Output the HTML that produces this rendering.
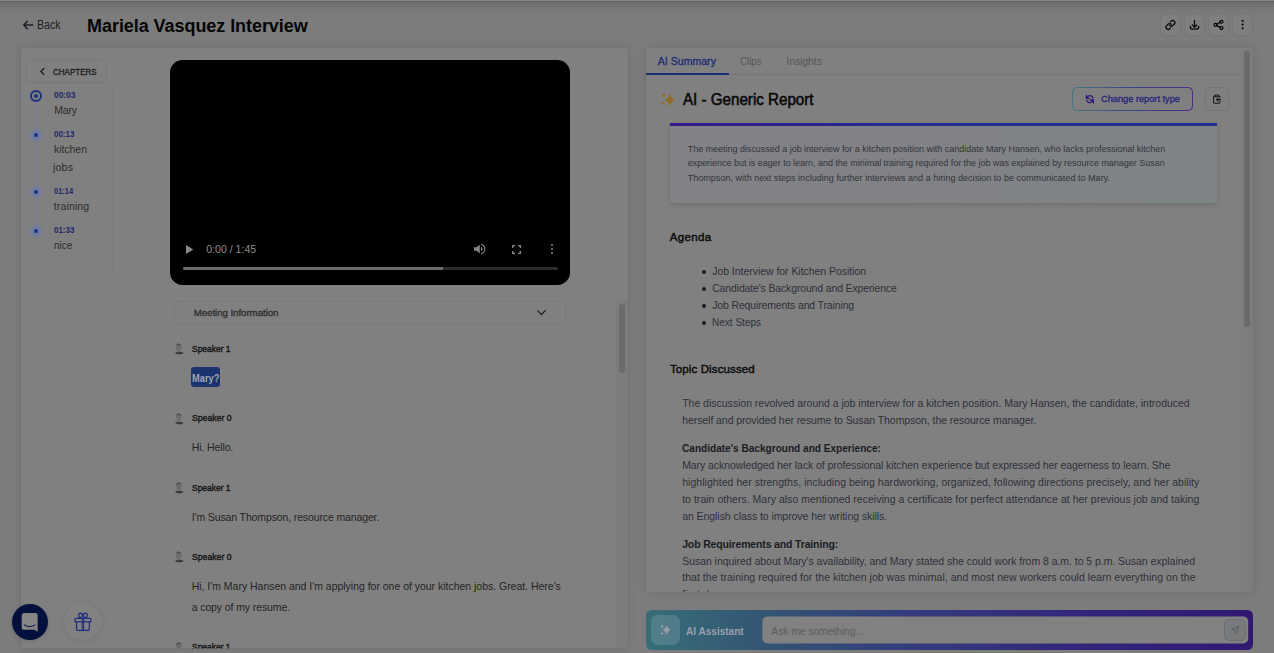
<!DOCTYPE html>
<html lang="en"><head><meta charset="utf-8"><title>Mariela Vasquez Interview</title>
<style>
*{box-sizing:border-box}
html,body{margin:0;padding:0}
body{width:1274px;height:653px;overflow:hidden;background:#7c7c7c;position:relative;font-family:"Liberation Sans",sans-serif;}
.abs{position:absolute}
.t{position:absolute;white-space:nowrap;line-height:normal;}
.panel{position:absolute;background:#808080;border-radius:4px;box-shadow:0 0 8px rgba(0,0,0,.12)}
.btn{position:absolute;border:1px solid #747577;border-radius:5px;background:#808080}
svg{position:absolute;overflow:visible}
</style></head>
<body>
<div class="abs" style="left:0;top:0;width:1274px;height:17px;background:linear-gradient(#6d6d6d,#727272 25%,#787878 55%,rgba(124,124,124,0))"></div>
<div class="abs" style="left:0;top:0;width:1274px;height:1px;background:#838383"></div>
<div class="abs" style="left:0;top:1px;width:1274px;height:1px;background:#626364"></div>
<svg style="left:0;top:0" width="80" height="40" viewBox="0 0 80 40"><path d="M27.4 21.3L23.7 25L27.400 28.700M24 25H32.600" fill="none" stroke="#1d2026" stroke-width="1.550" stroke-linecap="round" stroke-linejoin="round"/></svg>
<div class="btn" style="left:1160.2px;top:14.1px;width:20.6px;height:21.7px;border-radius:5.5px;background:#7f7f7f;border-color:#72767b"></div>
<div class="btn" style="left:1184.2px;top:14.1px;width:20.6px;height:21.7px;border-radius:5.5px;background:#7f7f7f;border-color:#72767b"></div>
<div class="btn" style="left:1208.2px;top:14.1px;width:20.6px;height:21.7px;border-radius:5.5px;background:#7f7f7f;border-color:#72767b"></div>
<div class="btn" style="left:1232.2px;top:14.1px;width:20.6px;height:21.7px;border-radius:5.5px;background:#7f7f7f;border-color:#72767b"></div>
<svg style="left:0;top:0" width="1274" height="48" viewBox="0 0 1274 48" fill="none" stroke="#0a0a0a" stroke-linecap="round" stroke-linejoin="round">
<g transform="translate(1165.1 19.6) scale(0.4458)" stroke-width="2.9"><path d="M10 13a5 5 0 0 0 7.54.54l3-3a5 5 0 0 0-7.07-7.07l-1.72 1.71"/><path d="M14 11a5 5 0 0 0-7.54-.54l-3 3a5 5 0 0 0 7.07 7.07l1.71-1.71"/></g>
<path d="M1194.5 20.4V27M1192.3 24.9L1194.5 27.2L1196.7 24.9" stroke-width="1.3"/>
<path d="M1190.4 26.4V27.4Q1190.4 29.1 1192.1 29.1H1196.900Q1198.600 29.100 1198.600 27.400V26.400" stroke-width="1.450"/>
<g stroke-width="1.250"><circle cx="1215.500" cy="24.900" r="1.450"/><circle cx="1221.500" cy="21.700" r="1.450"/><circle cx="1221.500" cy="28.100" r="1.450"/><path d="M1216.800 24.200L1220.200 22.400M1216.800 25.600L1220.200 27.400"/></g>
<g fill="#0a0a0a" stroke="none"><circle cx="1242.600" cy="20.900" r="1.100"/><circle cx="1242.600" cy="24.600" r="1.100"/><circle cx="1242.600" cy="28.300" r="1.100"/></g>
</svg>
<div class="panel" style="left:20.5px;top:47.6px;width:607.7px;height:600.8px"></div>
<div class="btn" style="left:26.3px;top:60px;width:80.4px;height:23px;border-radius:4.5px;border-color:#777879"></div>
<svg style="left:39.5px;top:68.4px" width="5" height="7" viewBox="0 0 5 7"><path d="M3.9 0.5 L0.8 3.500 L3.900 6.500" fill="none" stroke="#151515" stroke-width="1.1" stroke-linecap="round" stroke-linejoin="round"/></svg>
<div class="abs" style="left:35.4px;top:96px;width:1.3px;height:135px;background:#7a8090"></div>
<div class="abs" style="left:112.2px;top:88px;width:1px;height:186px;background:#7a7a7a"></div>
<div class="abs" style="left:30px;top:89.9px;width:12px;height:12px;border-radius:50%;border:2.1px solid #1a3380;background:#808080"></div>
<div class="abs" style="left:33.6px;top:93.5px;width:4.8px;height:4.8px;border-radius:50%;background:#1a3380"></div>
<div class="abs" style="left:30px;top:129.1px;width:12px;height:12px;border-radius:50%;background:#6f7c9c"></div>
<div class="abs" style="left:33.8px;top:132.9px;width:4.4px;height:4.4px;border-radius:50%;background:#1a317e"></div>
<div class="abs" style="left:30px;top:185.9px;width:12px;height:12px;border-radius:50%;background:#6f7c9c"></div>
<div class="abs" style="left:33.8px;top:189.70000000000002px;width:4.4px;height:4.4px;border-radius:50%;background:#1a317e"></div>
<div class="abs" style="left:30px;top:224.8px;width:12px;height:12px;border-radius:50%;background:#6f7c9c"></div>
<div class="abs" style="left:33.8px;top:228.60000000000002px;width:4.4px;height:4.4px;border-radius:50%;background:#1a317e"></div>
<div class="abs" style="left:170px;top:60px;width:400px;height:225px;border-radius:12.5px;background:#000"></div>
<svg style="left:186px;top:244.6px" width="7.500" height="9" viewBox="0 0 7.500 9"><path d="M0 0 L7.300 4.500 L0 9 Z" fill="#868686"/></svg>
<div class="abs" style="left:182.6px;top:267.1px;width:375.6px;height:3px;border-radius:1.5px;background:#2b2b2b"></div>
<div class="abs" style="left:182.6px;top:267.1px;width:260.5px;height:3px;border-radius:1.5px 0 0 1.5px;background:#6c6c6c"></div>
<svg style="left:472.800px;top:243px" width="13" height="12" viewBox="0 0 26 24"><path d="M2 8.500h5l6.500-5.500v18l-6.500-5.500h-5z" fill="#868686"/><path d="M16 7.600c2 .9 3.200 2.500 3.200 4.400s-1.200 3.500-3.200 4.400z" fill="#868686"/><path d="M16.200 2.800c4.300 1.100 7.300 4.800 7.300 9.200s-3 8.100-7.300 9.200" fill="none" stroke="#868686" stroke-width="2.200"/></svg>
<svg style="left:511.700px;top:245px" width="9" height="9" viewBox="0 0 18 18" fill="none" stroke="#868686" stroke-width="2.700"><path d="M1.300 6V1.300H6M12 1.300h4.700V6M16.700 12v4.700H12M6 16.700H1.300V12"/></svg>
<div class="abs" style="left:550.8px;top:243.75px;width:2.3px;height:2.3px;border-radius:50%;background:#868686"></div>
<div class="abs" style="left:550.8px;top:247.75px;width:2.3px;height:2.3px;border-radius:50%;background:#868686"></div>
<div class="abs" style="left:550.8px;top:251.75px;width:2.3px;height:2.3px;border-radius:50%;background:#868686"></div>
<div class="abs" style="left:616.2px;top:301.4px;width:12px;height:347px;background:#7c7c7c;border-bottom-right-radius:4px"></div>
<div class="abs" style="left:619px;top:304.300px;width:6px;height:69px;border-radius:3px;background:#686a6c"></div>
<div class="btn" style="left:174px;top:301px;width:392.3px;height:22.6px;border-radius:5px;border-color:#78797a"></div>
<svg style="left:536.500px;top:310.300px" width="9" height="5.500" viewBox="0 0 9 5.500"><path d="M0.700 0.700 L4.500 4.500 L8.300 0.700" fill="none" stroke="#1c1c1c" stroke-width="1.200" stroke-linecap="round" stroke-linejoin="round"/></svg>
<svg style="left:175px;top:343.2px" width="9" height="11.5" viewBox="0 0 9 11.5"><path d="M1.1 4.2 C1.1 1.6 2.2 .5 3.75 .5 S6.4 1.600 6.400 4.200 C6.400 6 5.700 7.200 5.300 7.800 V9.200 H2.200 V7.800 C1.800 7.200 1.100 6 1.100 4.200Z" fill="#6d6d6d"/><path d="M1.100 3.600 C1.100 1.400 2.200 .4 3.750 .4 S6.400 1.400 6.400 3.600 C5.800 2.300 5 1.900 3.750 1.900 S1.700 2.300 1.100 3.600Z" fill="#4c4c4c"/><path d="M.2 9.500 C.9 9.400 1.600 9.100 2.100 8.700 C3 9.700 4.500 9.700 5.400 8.700 C5.900 9.100 7.500 9.500 8.700 9.500 C8.300 10.600 6.800 11.300 4.400 11.300 S.6 10.600 .2 9.500Z" fill="#353535"/></svg>
<svg style="left:175px;top:412.6px" width="9" height="11.5" viewBox="0 0 9 11.5"><path d="M1.1 4.2 C1.1 1.6 2.2 .5 3.75 .5 S6.4 1.600 6.400 4.200 C6.400 6 5.700 7.200 5.300 7.800 V9.200 H2.200 V7.800 C1.800 7.200 1.100 6 1.100 4.200Z" fill="#6d6d6d"/><path d="M1.100 3.600 C1.100 1.400 2.200 .4 3.750 .4 S6.400 1.400 6.400 3.600 C5.800 2.300 5 1.900 3.750 1.900 S1.700 2.300 1.100 3.600Z" fill="#4c4c4c"/><path d="M.2 9.500 C.9 9.400 1.600 9.100 2.100 8.700 C3 9.700 4.500 9.700 5.400 8.700 C5.900 9.100 7.500 9.500 8.700 9.500 C8.300 10.600 6.800 11.300 4.400 11.300 S.6 10.600 .2 9.500Z" fill="#353535"/></svg>
<svg style="left:175px;top:482.0px" width="9" height="11.5" viewBox="0 0 9 11.5"><path d="M1.1 4.2 C1.1 1.6 2.2 .5 3.75 .5 S6.4 1.600 6.400 4.200 C6.400 6 5.700 7.200 5.300 7.800 V9.200 H2.200 V7.800 C1.800 7.200 1.100 6 1.100 4.200Z" fill="#6d6d6d"/><path d="M1.100 3.600 C1.100 1.400 2.200 .4 3.750 .4 S6.400 1.400 6.400 3.600 C5.800 2.300 5 1.900 3.750 1.900 S1.700 2.300 1.100 3.600Z" fill="#4c4c4c"/><path d="M.2 9.500 C.9 9.400 1.600 9.100 2.100 8.700 C3 9.700 4.500 9.700 5.400 8.700 C5.900 9.100 7.500 9.500 8.700 9.500 C8.300 10.600 6.800 11.300 4.400 11.300 S.6 10.600 .2 9.500Z" fill="#353535"/></svg>
<svg style="left:175px;top:551.4px" width="9" height="11.5" viewBox="0 0 9 11.5"><path d="M1.1 4.2 C1.1 1.6 2.2 .5 3.75 .5 S6.4 1.600 6.400 4.200 C6.400 6 5.700 7.200 5.300 7.800 V9.200 H2.200 V7.800 C1.800 7.200 1.100 6 1.100 4.200Z" fill="#6d6d6d"/><path d="M1.100 3.600 C1.100 1.400 2.200 .4 3.750 .4 S6.400 1.400 6.400 3.600 C5.800 2.300 5 1.900 3.750 1.900 S1.700 2.300 1.100 3.600Z" fill="#4c4c4c"/><path d="M.2 9.500 C.9 9.400 1.600 9.100 2.100 8.700 C3 9.700 4.500 9.700 5.400 8.700 C5.900 9.100 7.500 9.500 8.700 9.500 C8.300 10.600 6.800 11.300 4.400 11.300 S.6 10.600 .2 9.500Z" fill="#353535"/></svg>
<svg style="left:175px;top:641.8px;clip-path:inset(0 0 4.9px 0)" width="9" height="11.5" viewBox="0 0 9 11.5"><path d="M1.1 4.2 C1.1 1.6 2.2 .5 3.75 .5 S6.4 1.600 6.400 4.200 C6.400 6 5.700 7.200 5.300 7.800 V9.200 H2.200 V7.800 C1.800 7.200 1.100 6 1.100 4.200Z" fill="#6d6d6d"/><path d="M1.100 3.600 C1.100 1.400 2.200 .4 3.750 .4 S6.400 1.400 6.400 3.600 C5.800 2.300 5 1.900 3.750 1.900 S1.700 2.300 1.100 3.600Z" fill="#4c4c4c"/><path d="M.2 9.500 C.9 9.400 1.600 9.100 2.100 8.700 C3 9.700 4.500 9.700 5.400 8.700 C5.900 9.100 7.500 9.500 8.700 9.500 C8.300 10.600 6.800 11.300 4.400 11.300 S.6 10.600 .2 9.500Z" fill="#353535"/></svg>
<div class="abs" style="left:191.100px;top:366.900px;width:28.900px;height:20.100px;border-radius:3px;background:#19346f"></div>
<div class="abs" style="left:11.7px;top:604.3px;width:36px;height:36px;border-radius:50%;background:#03103d;box-shadow:0 1px 4px rgba(0,0,0,.15)"></div>
<div class="abs" style="left:64px;top:602.8px;width:37.6px;height:37.6px;border-radius:50%;background:#818181;box-shadow:0 1px 6px rgba(0,0,0,.10)"></div>
<svg style="left:0;top:596px" width="120" height="57" viewBox="0 596 120 57"><path d="M24.2 613.1H35.400A2.300 2.300 0 0 1 37.700 615.400V631.800L34.200 629.700H23.500A1.800 1.800 0 0 1 21.700 627.900V615.600A2.500 2.500 0 0 1 24.200 613.100Z" fill="#858585"/><path d="M24.300 624.900Q29.700 628.600 35 624.900" fill="none" stroke="#03103d" stroke-width="0.950" stroke-linecap="round"/><g fill="none" stroke="#1e2c7e" stroke-width="1.200" stroke-linejoin="round" stroke-linecap="round"><rect x="74.900" y="618.300" width="16" height="3.600" rx="0.900"/><path d="M76.500 621.900V629.200Q76.500 630.300 77.600 630.300H88.200Q89.300 630.300 89.300 629.200V621.900"/><path d="M82.200 618.300V630.300M83.600 618.300V630.300" stroke-width="1"/><ellipse cx="80.500" cy="615.300" rx="1.900" ry="2.200"/><ellipse cx="85.300" cy="615.300" rx="1.900" ry="2.200"/></g></svg>
<div class="panel" style="left:646px;top:47.800px;width:607px;height:544px;background:#7d7d7d"></div>
<div class="abs" style="left:646px;top:47.800px;width:595px;height:544px;background:#808080;border-radius:4px 0 0 4px"></div>
<div class="abs" style="left:646px;top:73.800px;width:595px;height:1px;background:#777879"></div>
<div class="abs" style="left:646px;top:73.200px;width:82.600px;height:1.800px;background:#1b2d78"></div>
<svg style="left:0;top:0" width="1274" height="653" viewBox="0 0 1274 653" fill="#8c6e2a"><path d="M669.8 93.7Q671.18 98.36 675.0999999999999 100Q671.18 101.64 669.8 106.3Q668.42 101.64 664.5 100Q668.42 98.36 669.8 93.7Z"/><path d="M663.9 93.10000000000001Q664.32 94.78 666.0 95.2Q664.32 95.62 663.9 97.3Q663.48 95.62 661.8 95.2Q663.48 94.78 663.9 93.10000000000001Z"/><path d="M663 100.9Q663.46 102.74 665.3 103.2Q663.46 103.66 663 105.5Q662.54 103.66 660.7 103.2Q662.54 102.74 663 100.9Z"/></svg>
<div class="abs" style="left:1072px;top:86.900px;width:121px;height:23.800px;border-radius:5px;background:linear-gradient(90deg,#487884,#384488 50%,#502a8a)"></div>
<div class="abs" style="left:1072.800px;top:87.700px;width:119.400px;height:22.200px;border-radius:4.300px;background:#808080"></div>
<svg style="left:1080px;top:90px" width="20" height="18" viewBox="1080 90 20 18" fill="none" stroke="#2d1478" stroke-width="1.300" stroke-linecap="round" stroke-linejoin="round"><path d="M1086.400 95.300V98.300H1089.400"/><path d="M1086.700 98C1087.600 96.300 1088.700 95.700 1089.900 95.700C1091.400 95.700 1092.500 96.600 1093.100 98"/><path d="M1093.300 103V100H1090.300"/><path d="M1093 100.300C1092.100 102 1091 102.600 1089.800 102.600C1088.300 102.600 1087.200 101.700 1086.600 100.300"/></svg>
<div class="btn" style="left:1205.200px;top:87px;width:23.600px;height:23.900px;border-radius:4.500px;border-color:#747576"></div>
<svg style="left:1205px;top:87px" width="24" height="24" viewBox="1205 87 24 24" fill="none" stroke="#161616" stroke-width="1.050" stroke-linecap="round" stroke-linejoin="round"><path d="M1215.200 95.900H1214.500Q1213.600 95.900 1213.600 96.800V102.300Q1213.600 103.200 1214.500 103.200H1219Q1219.900 103.200 1219.900 102.300V101.500M1218.400 95.900H1219Q1219.900 95.900 1219.900 96.800V97.700"/><rect x="1215.300" y="94.900" width="3" height="1.800" rx="0.500"/><path d="M1220.800 99.600H1216.700M1217.900 98.300L1216.600 99.600L1217.900 100.900"/></svg>
<div class="abs" style="left:670px;top:123px;width:547.200px;height:80px;border-radius:0 0 4px 4px;background:linear-gradient(90deg,#828287,#818286 50%,#7e8485);box-shadow:0 2px 5px rgba(0,0,0,.13)"></div>
<div class="abs" style="left:670px;top:123px;width:547.200px;height:2.900px;background:linear-gradient(90deg,#35198a,#222c8e 40%,#1f3090)"></div>
<div class="abs" style="left:701.700px;top:269.7px;width:4.200px;height:4.200px;border-radius:50%;background:#1a1c2a"></div>
<div class="abs" style="left:701.700px;top:286.7px;width:4.200px;height:4.200px;border-radius:50%;background:#1a1c2a"></div>
<div class="abs" style="left:701.700px;top:303.7px;width:4.200px;height:4.200px;border-radius:50%;background:#1a1c2a"></div>
<div class="abs" style="left:701.700px;top:320.7px;width:4.200px;height:4.200px;border-radius:50%;background:#1a1c2a"></div>
<div class="abs" style="left:1244.200px;top:50.800px;width:5.800px;height:276px;border-radius:3px;background:#686a6c"></div>
<div class="abs" style="left:646px;top:610.100px;width:607px;height:39.600px;border-radius:5.500px;background:linear-gradient(90deg,#376e78 0%,#335273 22%,#343f7c 40%,#32277a 70%,#311870 100%)"></div>
<div class="abs" style="left:650.700px;top:614.800px;width:29.600px;height:30.200px;border-radius:7px;background:rgba(255,255,255,.13)"></div>
<svg style="left:0;top:0" width="1274" height="653" viewBox="0 0 1274 653" fill="#989ca4"><path d="M666.6 625.1Q667.56 628.73 670.3000000000001 630Q667.56 631.27 666.6 634.9Q665.64 631.27 662.9 630Q665.64 628.73 666.6 625.1Z"/><path d="M662.1 624.5Q662.44 626.02 663.8000000000001 626.4Q662.44 626.78 662.1 628.3Q661.76 626.78 660.4 626.4Q661.76 626.02 662.1 624.5Z"/><path d="M662.1 631.5Q662.44 633.02 663.8000000000001 633.4Q662.44 633.78 662.1 635.3Q661.76 633.78 660.4 633.4Q661.76 633.02 662.1 631.5Z"/></svg>
<svg style="left:750px;top:606px" width="510" height="47" viewBox="750 606 510 47"><rect x="762.500" y="616.400" width="485.700" height="27" rx="5" fill="#818181"/></svg>
<div class="abs" style="left:1224.300px;top:618.900px;width:21.500px;height:21.800px;border-radius:5.500px;background:#787a7c;border:1px solid #6b6e72"></div>
<svg style="left:1230.700px;top:625.600px" width="8.600" height="8.600" viewBox="0 0 24 24" fill="none" stroke="#54575b" stroke-width="2.200" stroke-linejoin="round" stroke-linecap="round"><path d="M22 2L11 13M22 2l-7 20-4-9-9-4z"/></svg>
<div class="t" style="left:37.40px;top:18.40px;font-size:12px;color:#1d2026;transform:scaleX(0.8806);transform-origin:0 0;">Back</div>
<div class="t" style="left:87.10px;top:16.00px;font-size:18px;color:#050505;font-weight:700;letter-spacing:-0.063px;">Mariela Vasquez Interview</div>
<div class="t" style="left:52.50px;top:65.90px;font-size:9.6px;color:#1c1c22;transform:scaleX(0.8344);transform-origin:0 0;-webkit-text-stroke:0.35px #1c1c22;">CHAPTERS</div>
<div class="t" style="left:53.70px;top:90.00px;font-size:9px;color:#22266a;font-weight:700;transform:scaleX(0.9292);transform-origin:0 0;">00:03</div>
<div class="t" style="left:54.30px;top:103.80px;font-size:10.5px;color:#2c2c2c;letter-spacing:-0.215px;">Mary</div>
<div class="t" style="left:53.80px;top:129.00px;font-size:9px;color:#22266a;font-weight:700;transform:scaleX(0.8814);transform-origin:0 0;">00:13</div>
<div class="t" style="left:54.00px;top:142.90px;font-size:10.5px;color:#2c2c2c;letter-spacing:-0.047px;">kitchen</div>
<div class="t" style="left:53.10px;top:160.60px;font-size:10.5px;color:#2c2c2c;letter-spacing:0.178px;">jobs</div>
<div class="t" style="left:54.00px;top:185.70px;font-size:9px;color:#22266a;font-weight:700;transform:scaleX(0.8336);transform-origin:0 0;">01:14</div>
<div class="t" style="left:53.80px;top:199.60px;font-size:10.5px;color:#2c2c2c;letter-spacing:0.135px;">training</div>
<div class="t" style="left:53.80px;top:224.80px;font-size:9px;color:#22266a;font-weight:700;transform:scaleX(0.8814);transform-origin:0 0;">01:33</div>
<div class="t" style="left:54.10px;top:238.60px;font-size:10.5px;color:#2c2c2c;transform:scaleX(0.9499);transform-origin:0 0;">nice</div>
<div class="t" style="left:206.30px;top:242.60px;font-size:10.5px;color:#8e8e8e;letter-spacing:0.017px;">0:00 / 1:45</div>
<div class="t" style="left:193.70px;top:307.10px;font-size:9.75px;color:#2e2e2e;letter-spacing:-0.076px;-webkit-text-stroke:0.3px #2e2e2e;">Meeting Information</div>
<div class="t" style="left:191.60px;top:342.80px;font-size:9.75px;color:#151515;transform:scaleX(0.8661);transform-origin:0 0;-webkit-text-stroke:0.4px #151515;">Speaker 1</div>
<div class="t" style="left:191.60px;top:412.20px;font-size:9.75px;color:#151515;transform:scaleX(0.8886);transform-origin:0 0;-webkit-text-stroke:0.4px #151515;">Speaker 0</div>
<div class="t" style="left:191.60px;top:481.60px;font-size:9.75px;color:#151515;transform:scaleX(0.8661);transform-origin:0 0;-webkit-text-stroke:0.4px #151515;">Speaker 1</div>
<div class="t" style="left:191.60px;top:551.00px;font-size:9.75px;color:#151515;transform:scaleX(0.8886);transform-origin:0 0;-webkit-text-stroke:0.4px #151515;">Speaker 0</div>
<div class="t" style="left:191.60px;top:641.40px;font-size:9.75px;color:#151515;transform:scaleX(0.8661);transform-origin:0 0;-webkit-text-stroke:0.4px #151515;clip-path:inset(0 0 4.0px 0);">Speaker 1</div>
<div class="t" style="left:192.30px;top:371.60px;font-size:10.5px;color:#a2a4aa;font-weight:700;transform:scaleX(0.8857);transform-origin:0 0;">Mary?</div>
<div class="t" style="left:191.80px;top:441.00px;font-size:10.5px;color:#242424;letter-spacing:-0.123px;">Hi. Hello.</div>
<div class="t" style="left:191.80px;top:510.60px;font-size:10.5px;color:#242424;letter-spacing:-0.127px;">I'm Susan Thompson, resource manager.</div>
<div class="t" style="left:191.70px;top:580.30px;font-size:10.5px;color:#242424;letter-spacing:-0.020px;">Hi, I'm Mary Hansen and I'm applying for one of your kitchen jobs. Great. Here's</div>
<div class="t" style="left:191.70px;top:601.30px;font-size:10.5px;color:#242424;letter-spacing:-0.104px;">a copy of my resume.</div>
<div class="t" style="left:657.80px;top:55.10px;font-size:10.5px;color:#1d2c76;letter-spacing:0.037px;-webkit-text-stroke:0.3px #1d2c76;">AI Summary</div>
<div class="t" style="left:740.30px;top:55.10px;font-size:10.5px;color:#575757;transform:scaleX(0.9253);transform-origin:0 0;">Clips</div>
<div class="t" style="left:786.30px;top:55.10px;font-size:10.5px;color:#575757;letter-spacing:-0.084px;">Insights</div>
<div class="t" style="left:682.50px;top:90.80px;font-size:15.75px;color:#080808;transform:scaleX(0.9618);transform-origin:0 0;-webkit-text-stroke:0.55px #080808;">AI - Generic Report</div>
<div class="t" style="left:1100.80px;top:92.80px;font-size:9.75px;color:#25257c;transform:scaleX(0.9463);transform-origin:0 0;-webkit-text-stroke:0.3px #25257c;">Change report type</div>
<div class="t" style="left:687.70px;top:143.70px;font-size:9px;color:#33343c;letter-spacing:-0.023px;">The meeting discussed a job interview for a kitchen position with candidate Mary Hansen, who lacks professional kitchen</div>
<div class="t" style="left:687.70px;top:158.20px;font-size:9px;color:#33343c;letter-spacing:-0.024px;">experience but is eager to learn, and the minimal training required for the job was explained by resource manager Susan</div>
<div class="t" style="left:687.70px;top:172.70px;font-size:9px;color:#33343c;letter-spacing:0.032px;">Thompson, with next steps including further interviews and a hiring decision to be communicated to Mary.</div>
<div class="t" style="left:669.80px;top:230.70px;font-size:11.5px;color:#0c0c0c;letter-spacing:0.349px;-webkit-text-stroke:0.45px #0c0c0c;">Agenda</div>
<div class="t" style="left:712.20px;top:264.60px;font-size:10.5px;color:#2e303a;letter-spacing:-0.041px;">Job Interview for Kitchen Position</div>
<div class="t" style="left:712.20px;top:281.60px;font-size:10.5px;color:#2e303a;letter-spacing:-0.149px;">Candidate's Background and Experience</div>
<div class="t" style="left:712.20px;top:298.50px;font-size:10.5px;color:#2e303a;letter-spacing:-0.140px;">Job Requirements and Training</div>
<div class="t" style="left:712.20px;top:315.50px;font-size:10.5px;color:#2e303a;transform:scaleX(0.9541);transform-origin:0 0;">Next Steps</div>
<div class="t" style="left:669.90px;top:362.80px;font-size:11.5px;color:#0c0c0c;letter-spacing:0.122px;-webkit-text-stroke:0.45px #0c0c0c;">Topic Discussed</div>
<div class="t" style="left:682.20px;top:397.20px;font-size:10.5px;color:#2e303a;letter-spacing:-0.019px;">The discussion revolved around a job interview for a kitchen position. Mary Hansen, the candidate, introduced</div>
<div class="t" style="left:682.20px;top:414.20px;font-size:10.5px;color:#2e303a;letter-spacing:-0.066px;">herself and provided her resume to Susan Thompson, the resource manager.</div>
<div class="t" style="left:682.20px;top:441.80px;font-size:10.5px;color:#1a1c24;font-weight:700;transform:scaleX(0.9594);transform-origin:0 0;">Candidate's Background and Experience:</div>
<div class="t" style="left:682.20px;top:458.90px;font-size:10.5px;color:#2e303a;letter-spacing:-0.078px;">Mary acknowledged her lack of professional kitchen experience but expressed her eagerness to learn. She</div>
<div class="t" style="left:682.20px;top:475.90px;font-size:10.5px;color:#2e303a;letter-spacing:0.043px;">highlighted her strengths, including being hardworking, organized, following directions precisely, and her ability</div>
<div class="t" style="left:682.20px;top:492.90px;font-size:10.5px;color:#2e303a;letter-spacing:0.020px;">to train others. Mary also mentioned receiving a certificate for perfect attendance at her previous job and taking</div>
<div class="t" style="left:682.20px;top:509.90px;font-size:10.5px;color:#2e303a;letter-spacing:-0.062px;">an English class to improve her writing skills.</div>
<div class="t" style="left:682.20px;top:537.50px;font-size:10.5px;color:#1a1c24;font-weight:700;letter-spacing:-0.154px;">Job Requirements and Training:</div>
<div class="t" style="left:682.20px;top:554.50px;font-size:10.5px;color:#2e303a;letter-spacing:-0.044px;">Susan inquired about Mary's availability, and Mary stated she could work from 8 a.m. to 5 p.m. Susan explained</div>
<div class="t" style="left:682.20px;top:571.40px;font-size:10.5px;color:#2e303a;letter-spacing:0.040px;">that the training required for the kitchen job was minimal, and most new workers could learn everything on the</div>
<div class="abs" style="left:646px;top:47.7px;width:595px;height:544.1px;overflow:hidden"><div class="t" style="left:36.20px;top:540.70px;font-size:10.5px;color:#2e303a;letter-spacing:0.233px">first day.</div></div>
<div class="t" style="left:686.30px;top:624.60px;font-size:10.5px;color:#9a9eaa;font-weight:700;transform:scaleX(0.9569);transform-origin:0 0;">AI Assistant</div>
<div class="t" style="left:771.30px;top:624.60px;font-size:10.5px;color:#5e5e5e;letter-spacing:-0.135px;">Ask me something...</div>
</body></html>
